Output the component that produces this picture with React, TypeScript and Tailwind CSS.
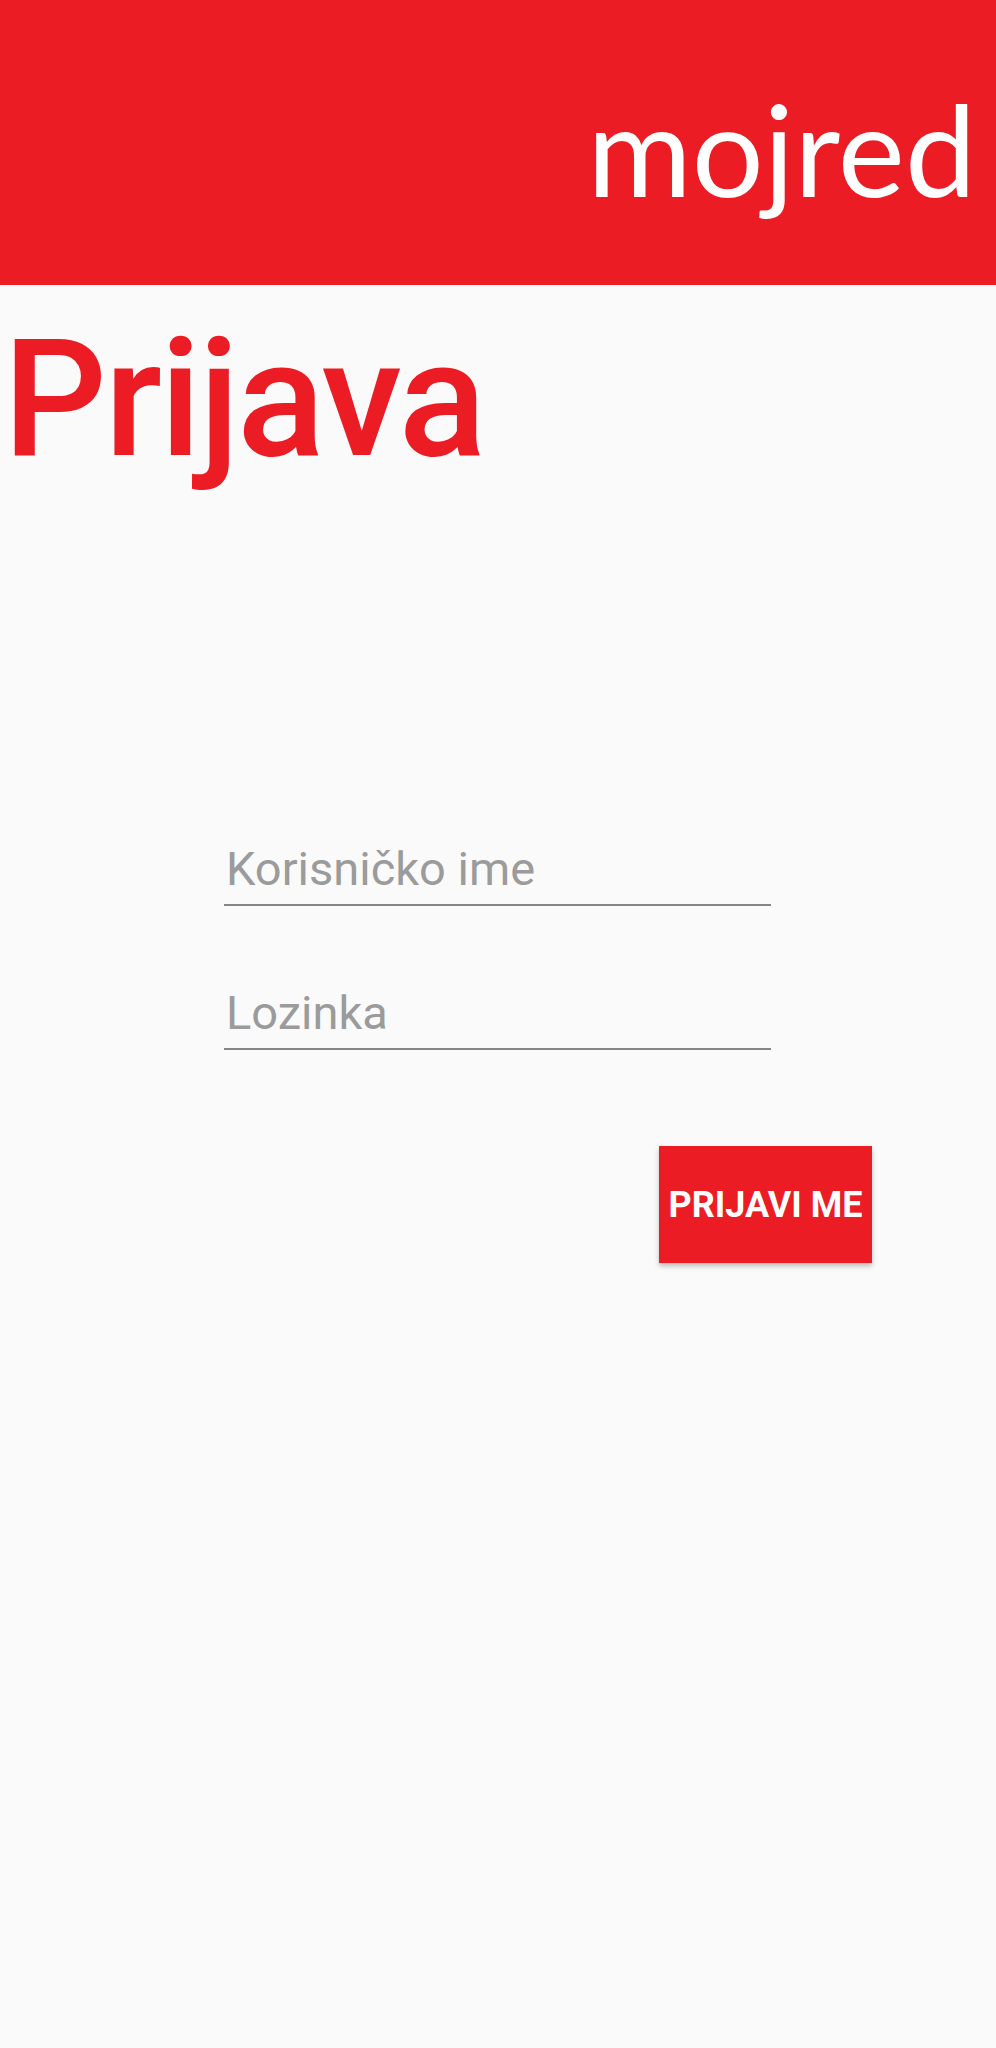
import React from "react";

export default function App() {
  return (
    <div className="min-h-[2048px] w-full bg-[#fafafa] font-['Roboto',sans-serif]">
      <header className="flex h-[285px] w-full items-start justify-end bg-[#ec1c24] pr-[20px] pt-[85px]">
        <span className="font-['Lato',sans-serif] text-[127px] leading-none text-white">mojred</span>
      </header>
      <h1 className="mt-[33px] pl-[3px] text-[163px] font-medium leading-none tracking-[-2.5px] text-[#ec1c24]">Prijava</h1>
      <form className="mt-[364px] flex flex-col" onSubmit={(e) => e.preventDefault()}>
        <div className="ml-[224px] w-[547px] border-b-2 border-[#858585] pb-[12px]">
          <input
            type="text"
            placeholder="Korisničko ime"
            className="block h-[47px] w-full bg-transparent px-[2px] font-['Roboto',sans-serif] text-[47px] leading-none text-[#333] outline-none placeholder:text-[#9b9b9b]"
          />
        </div>
        <div className="ml-[224px] mt-[83px] w-[547px] border-b-2 border-[#858585] pb-[12px]">
          <input
            type="password"
            placeholder="Lozinka"
            className="block h-[47px] w-full bg-transparent px-[2px] font-['Roboto',sans-serif] text-[47px] leading-none text-[#333] outline-none placeholder:text-[#9b9b9b]"
          />
        </div>
        <div className="ml-[659px] mt-[96px]">
          <button
            type="submit"
            className="flex h-[117px] w-[213px] items-center justify-center bg-[#ec1c24] font-['Roboto',sans-serif] text-[36px] font-bold text-white shadow-[0_3px_5px_rgba(0,0,0,0.25)]"
          >
            PRIJAVI ME
          </button>
        </div>
      </form>
    </div>
  );
}
